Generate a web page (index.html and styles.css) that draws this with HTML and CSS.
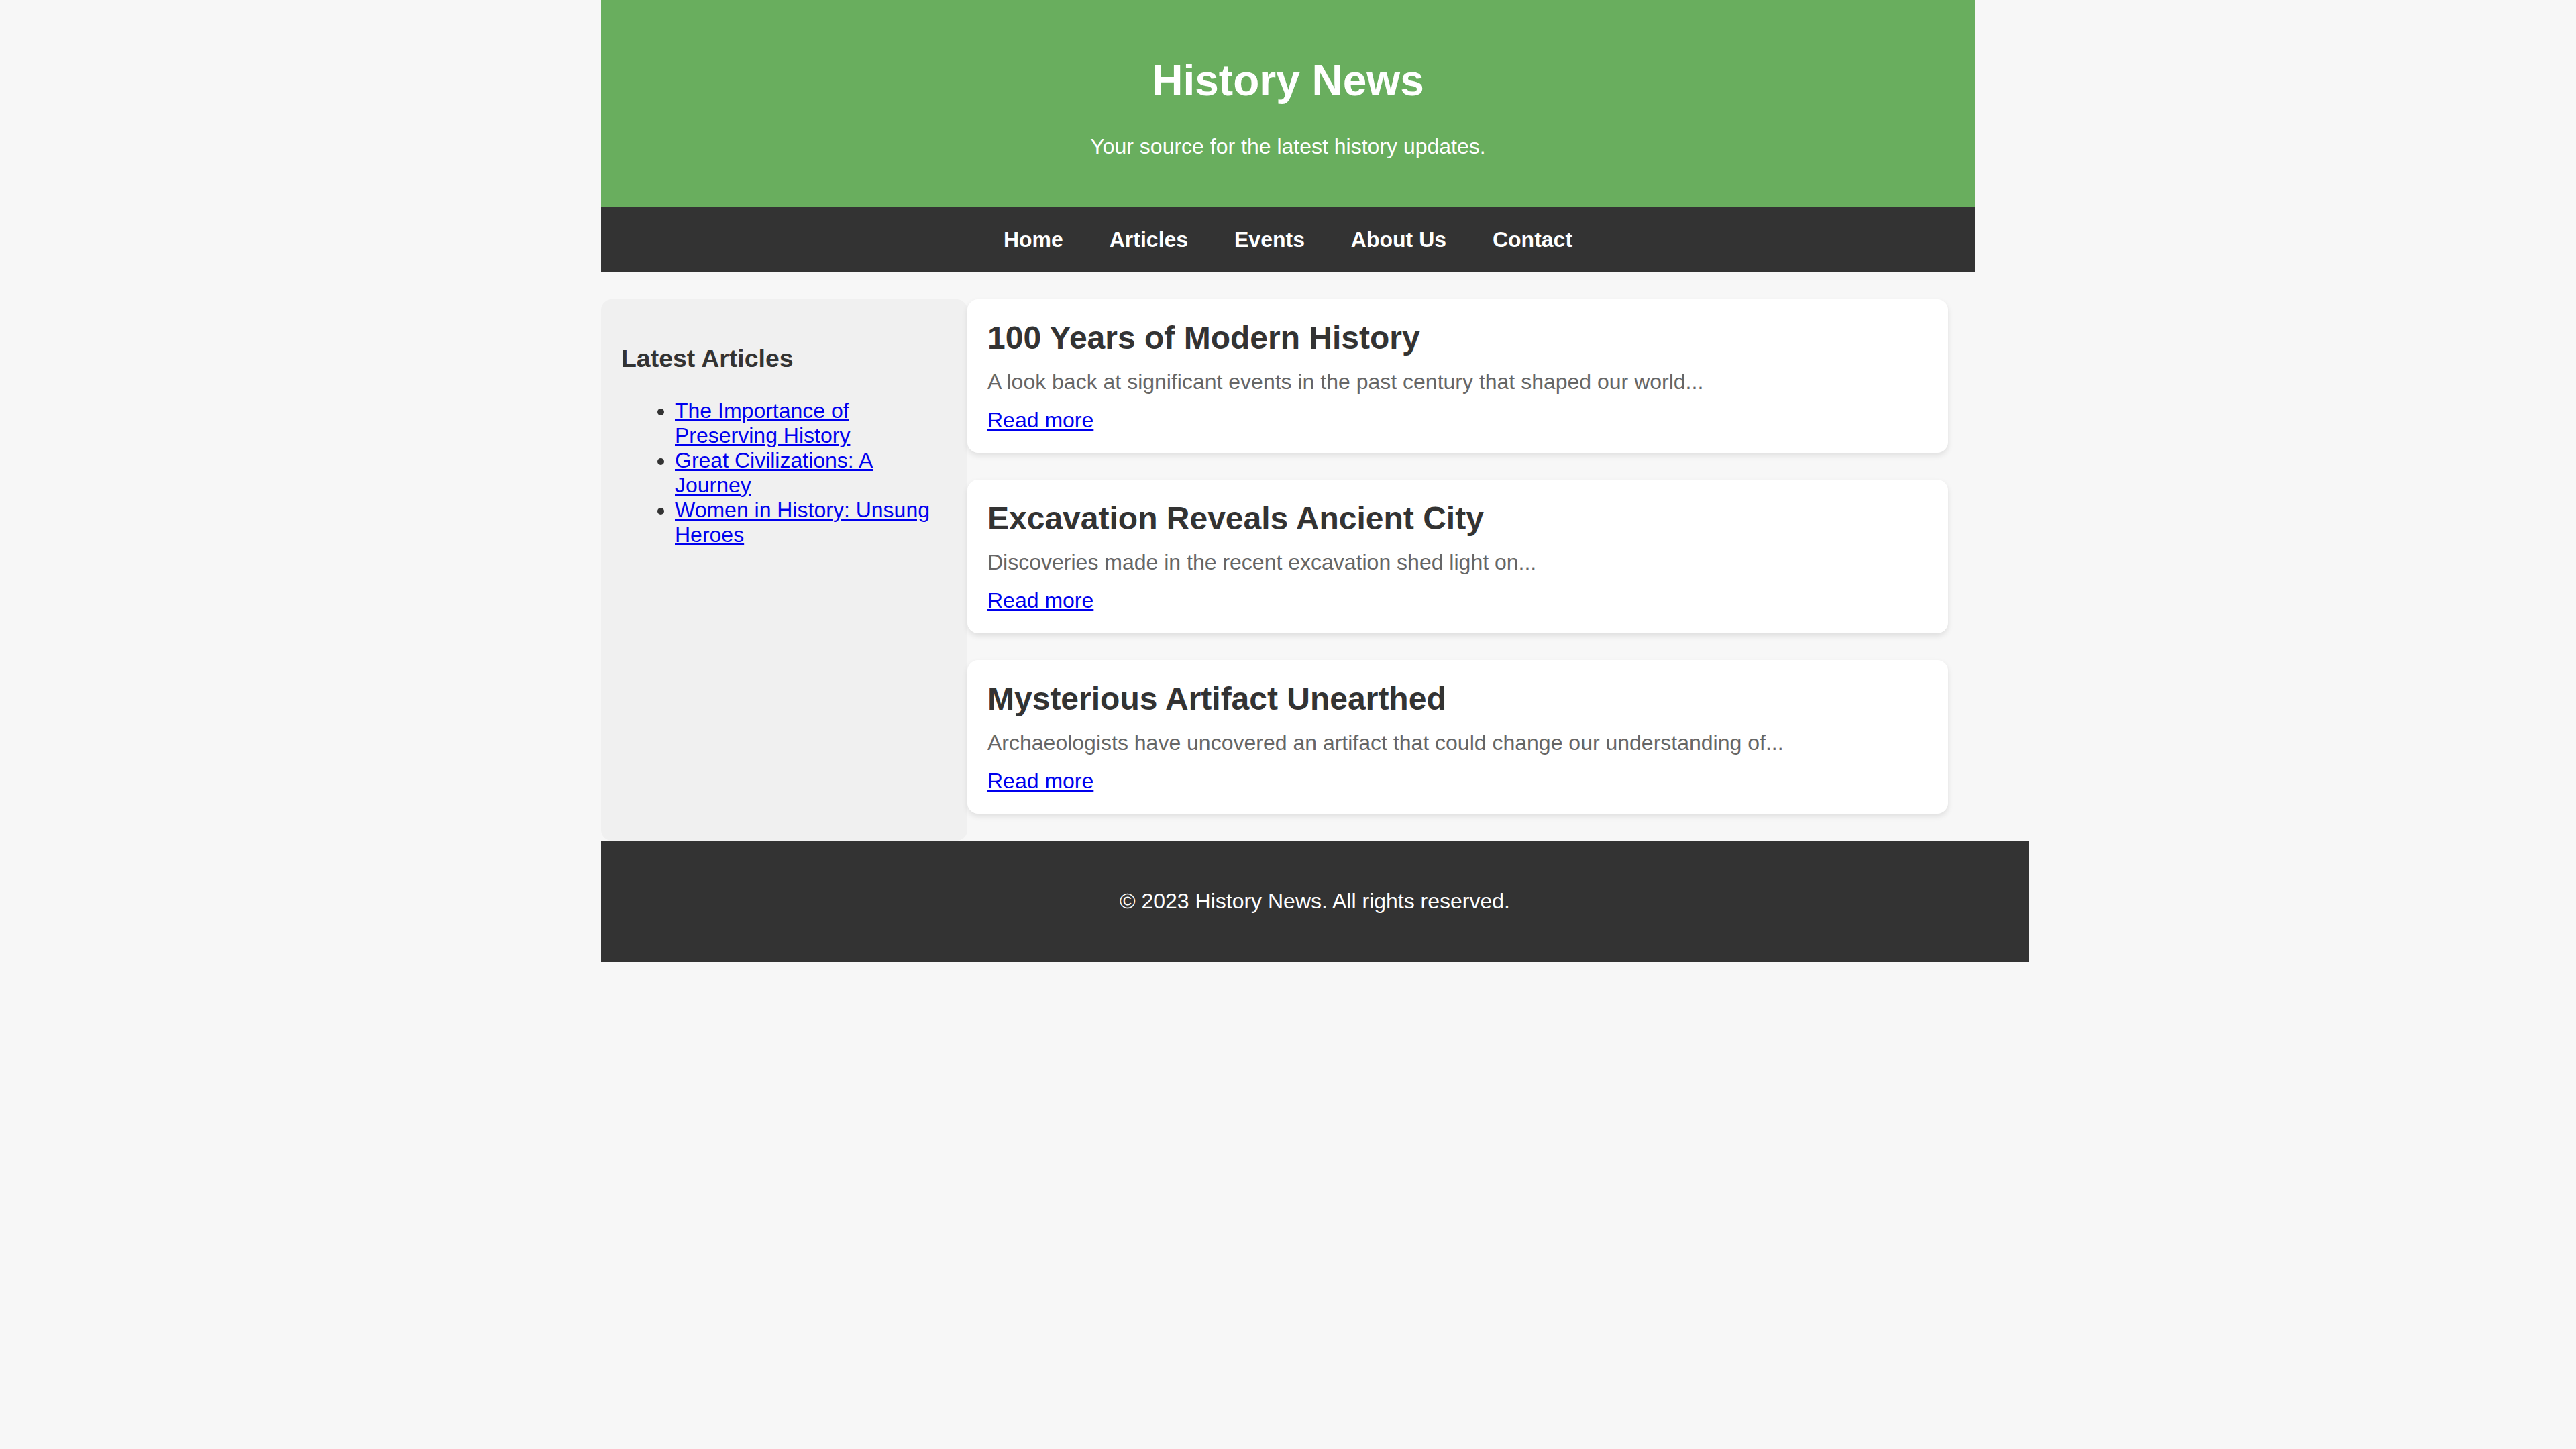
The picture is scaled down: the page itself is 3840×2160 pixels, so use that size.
FILE: index.html
```html
<!DOCTYPE html>
<html lang="en">
<head>
<meta charset="utf-8">
<title>History News</title>
<link rel="stylesheet" href="styles.css">
</head>
<body>
<div class="page">
  <header class="site-header">
    <h1 class="site-title">History News</h1>
    <p class="site-tagline">Your source for the latest history updates.</p>
  </header>
  <nav class="site-nav">
    <a href="#" class="nav-link">Home</a>
    <a href="#" class="nav-link">Articles</a>
    <a href="#" class="nav-link">Events</a>
    <a href="#" class="nav-link">About Us</a>
    <a href="#" class="nav-link">Contact</a>
  </nav>
  <main class="main">
    <aside class="sidebar">
      <h3 class="sidebar-title">Latest Articles</h3>
      <ul class="sidebar-list">
        <li><a href="#" class="link">The Importance of Preserving History</a></li>
        <li><a href="#" class="link">Great Civilizations: A Journey</a></li>
        <li><a href="#" class="link">Women in History: Unsung Heroes</a></li>
      </ul>
    </aside>
    <section class="articles">
      <article class="card">
        <h2 class="card-title">100 Years of Modern History</h2>
        <p class="card-text">A look back at significant events in the past century that shaped our world...</p>
        <a href="#" class="link">Read more</a>
      </article>
      <article class="card">
        <h2 class="card-title">Excavation Reveals Ancient City</h2>
        <p class="card-text">Discoveries made in the recent excavation shed light on...</p>
        <a href="#" class="link">Read more</a>
      </article>
      <article class="card">
        <h2 class="card-title">Mysterious Artifact Unearthed</h2>
        <p class="card-text">Archaeologists have uncovered an artifact that could change our understanding of...</p>
        <a href="#" class="link">Read more</a>
      </article>
    </section>
  </main>
  <footer class="site-footer">
    <p class="footer-text">&copy; 2023 History News. All rights reserved.</p>
  </footer>
</div>
</body>
</html>
```

FILE: styles.css
```css
html, body {
  margin: 0;
  padding: 0;
}

body {
  background: #f7f7f7;
  color: #333;
  font-family: "Liberation Sans", Arial, Helvetica, sans-serif;
  font-size: 32px;
}

.page {
  width: 2048px;
  margin: 0 auto;
}

.site-header {
  background: #69ae5e;
  color: #fff;
  text-align: center;
  padding: 40px;
}

.site-title {
  font-size: 64px;
  font-weight: bold;
  margin: 42.88px 0;
}

.site-tagline {
  font-size: 32px;
  margin: 32px 0;
}

.site-nav {
  background: #333;
  padding: 30px 0;
  text-align: center;
}

.nav-link {
  color: #fff;
  font-weight: bold;
  font-size: 32px;
  text-decoration: none;
  margin: 0 30px;
}

.main {
  display: flex;
  margin-top: 40px;
}

.sidebar {
  width: 546px;
  flex: none;
  box-sizing: border-box;
  padding: 30px;
  background: #f0f0f0;
  border-radius: 16px;
}

.sidebar-title {
  font-size: 37.44px;
  margin: 37.44px 0;
  color: #333;
}

.sidebar-list {
  margin: 32px 0;
  padding-left: 80px;
  font-size: 32px;
}

.link {
  color: #0000ee;
  text-decoration: underline;
}

.articles {
  flex: 1;
  padding-right: 40px;
}

.card {
  background: #fff;
  padding: 30px;
  margin-bottom: 40px;
  border-radius: 16px;
  box-shadow: 0 4px 8px rgba(0, 0, 0, 0.1);
}

.card-title {
  font-size: 48px;
  margin: 0;
  color: #333;
}

.card-text {
  font-size: 32px;
  color: #666;
  margin: 20px 0;
}

.site-footer {
  width: 100%;
  box-sizing: content-box;
  background: #333;
  color: #fff;
  text-align: center;
  padding: 40px;
}

.footer-text {
  font-size: 32px;
  margin: 32px 0;
}
```
